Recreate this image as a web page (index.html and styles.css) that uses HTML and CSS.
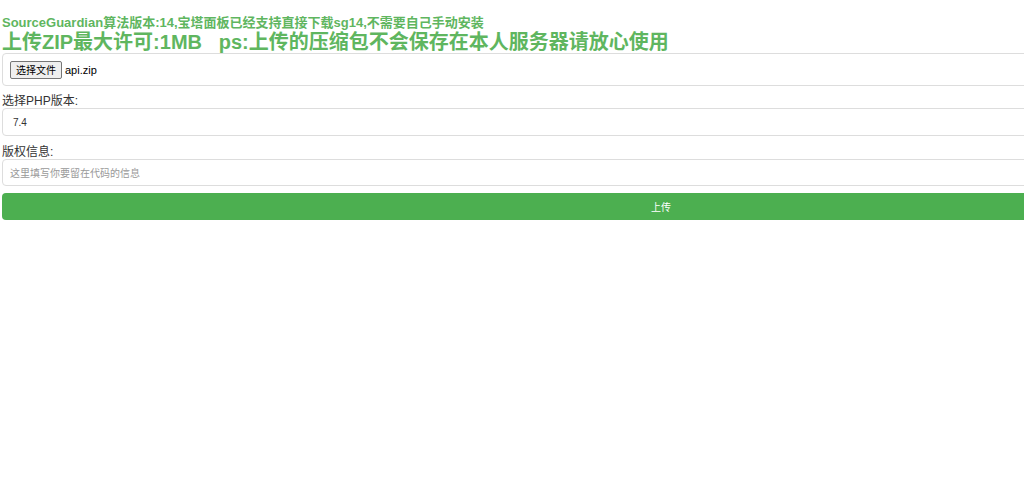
FILE: index.html
```html
<!DOCTYPE html>
<html lang="zh-CN">
<head>
<meta charset="utf-8">
<title>SourceGuardian</title>
<link rel="stylesheet" href="styles.css">
</head>
<body>
<div class="page">
  <h3 class="note">SourceGuardian算法版本:14,宝塔面板已经支持直接下载sg14,不需要自己手动安装</h3>
  <h2 class="title">上传ZIP最大许可:1MB&nbsp;&nbsp;&nbsp;ps:上传的压缩包不会保存在本人服务器请放心使用</h2>
  <form class="form">
    <div class="filebox">
      <span class="filebtn">选择文件</span>
      <span class="filename">api.zip</span>
    </div>
    <label class="label">选择PHP版本:</label>
    <div class="select">7.4</div>
    <label class="label">版权信息:</label>
    <div class="input">这里填写你要留在代码的信息</div>
    <div class="button">上传</div>
  </form>
</div>
</body>
</html>
```
FILE: styles.css
```css
html, body {
  margin: 0;
  padding: 0;
  background: #fff;
}
.page {
  padding: 15px 0 0 2px;
  overflow: hidden;
  font-family: "Liberation Sans", "Noto Sans CJK SC", sans-serif;
}
.note {
  margin: 0;
  font-size: 13px;
  line-height: 16px;
  font-weight: 700;
  color: #5fb65f;
}
.title {
  margin: 0;
  font-size: 20px;
  line-height: 22px;
  font-weight: 700;
  color: #5fb65f;
  white-space: nowrap;
}
.form {
  display: flex;
  flex-direction: column;
  width: 1318px;
}
.filebox {
  box-sizing: border-box;
  height: 33px;
  border: 1px solid #ddd;
  border-radius: 4px;
  display: flex;
  align-items: center;
  padding-left: 7px;
  font-size: 11px;
  color: #000;
}
.filebtn {
  box-sizing: border-box;
  height: 18px;
  padding: 0 5px;
  display: flex;
  align-items: center;
  border: 1px solid #767676;
  border-radius: 2px;
  background: #efefef;
  font-size: 10px;
  margin-right: 3px;
}
.label {
  margin-top: 8px;
  height: 14px;
  font-size: 12px;
  line-height: 14px;
  color: #333;
}
.select, .input {
  box-sizing: border-box;
  border: 1px solid #ddd;
  border-radius: 4px;
  display: flex;
  align-items: center;
  font-size: 10px;
}
.select {
  height: 28px;
  padding-left: 10px;
  color: #333;
  margin-bottom: 1px;
}
.input {
  height: 27px;
  padding-left: 7px;
  color: #999;
}
.button {
  margin-top: 7px;
  height: 27px;
  border-radius: 4px;
  background: #4caf50;
  color: #fff;
  font-size: 10px;
  display: flex;
  align-items: center;
  justify-content: center;
}
```
